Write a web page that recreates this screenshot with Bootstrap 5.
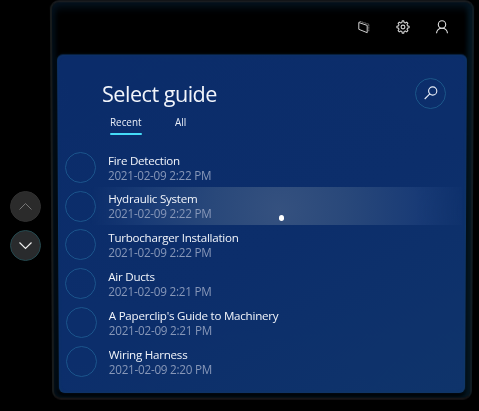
<!DOCTYPE html>
<html lang="en">
<head>
<meta charset="utf-8">
<meta name="viewport" content="width=device-width, initial-scale=1">
<title>Select guide</title>
<link href="https://cdn.jsdelivr.net/npm/bootstrap@5.3.0/dist/css/bootstrap.min.css" rel="stylesheet">
<style>
body{background:#000;font-family:"Open Sans","Noto Sans",sans-serif;color:#f2f5fb;width:479px;height:411px}
.pager{width:50px;padding:191px 0 0 10px;gap:8px}
.pager .btn{width:31px;height:31px;background:#2b2b2b;border:1px solid #303030;color:#777;flex:none}
.pager .btn.next{border-color:#24494f;color:#eee;background:#292b2d}
.frame{width:424px;height:400px;margin-top:1px;perspective:2000px;isolation:isolate}
.frame::before{content:"";position:absolute;z-index:-2;inset:0 1px;border-radius:9px;border:2px solid;border-color:#191c20 #101c23 #171516 #171b1c;background:#000;box-shadow:inset 0 5px 8px #05131f,inset -4px 0 5px #051b25,inset 3px 0 5px #020d15;transform:rotateX(-3.1deg)}
.topbar{height:54px;padding:17.5px 24.5px 0 0;gap:23px}
.topbar svg{display:block}
.panel{margin:0 7px 0 7px;height:339px;perspective:2000px}
.panel::before{content:"";position:absolute;z-index:-1;inset:0 1px;border-radius:6px;background:linear-gradient(150deg,#0b2c6a,#0c2e6b 55%,#0f346b);box-shadow:inset 0 0 3px #123c60,0 0 3px #04192a;transform:rotateX(-3.1deg)}
h1{font-size:21.6px;line-height:28px;font-weight:400;letter-spacing:-.5px}
.head{padding:25px 21px 0 45px;height:61px}
.ring{width:31px;height:31px;border:1px solid #1c558c;flex:none}
.find{margin-top:-2.5px;border-color:#1c5789;color:#e8edf7}
.tabs{padding-left:53px;font-size:9.9px;line-height:13px;height:32px}
.tabs .nav-link{color:#e8edf7;line-height:13px;height:19.5px;margin-right:33.5px;position:relative}
.tabs .active::after{content:"";display:block;height:2.5px;border-radius:2px;background:#45dcf7;margin-top:3.5px}
.guide{height:38.8px;padding-left:8px;gap:12px}
.guide+.guide{margin-left:.25px}
.guide:nth-child(n+5){margin-left:.8px}
.guide-title{font-size:11.6px;line-height:15px;letter-spacing:-.25px;margin-top:1px}
.guide-date{font-size:11.7px;line-height:15.5px;letter-spacing:-.25px;color:#8797b8}
.guide.hot::before{content:"";position:absolute;z-index:-1;left:10px;right:5px;top:0;bottom:1px;background:radial-gradient(ellipse 190px 190px at 213px 24px,#35517f,#29487a 35%,#193b76 72%,rgba(20,50,110,0))}
.pointer{left:221.5px;top:28.7px;width:5px;height:5.5px;background:#fff}
</style>
<script src="https://cdn.jsdelivr.net/npm/bootstrap@5.3.0/dist/js/bootstrap.bundle.min.js"></script>
</head>
<body class="d-flex overflow-hidden">
<nav class="pager d-flex flex-column flex-shrink-0" aria-label="Pages">
  <button class="btn rounded-circle p-0 d-flex align-items-center justify-content-center" aria-label="Up"><svg width="15" height="9" viewBox="0 0 15 9" fill="none" stroke="currentColor"><path d="M1.5 7.5l6-6 6 6"/></svg></button>
  <button class="btn next rounded-circle p-0 d-flex align-items-center justify-content-center" aria-label="Down"><svg width="15" height="9" viewBox="0 0 15 9" fill="none" stroke="currentColor" stroke-width="1.2"><path d="M1.5 1.5l6 6 6-6"/></svg></button>
</nav>
<main class="frame position-relative flex-shrink-0">
  <header class="topbar d-flex justify-content-end">
    <svg width="16" height="16" viewBox="0 0 16 16" fill="none" stroke="#d0d0d0" stroke-width="1" stroke-linejoin="round"><path d="M2.800 3.500l8.400 2.900v7.300L2.800 10.300z"/><path d="M4.500 2.500l8.300 2.700v7.500" stroke="#999" stroke-width=".8" stroke-dasharray="1.200 .4"/><path d="M2.800 3.500L4.500 2.500" stroke="#aaa"/></svg>
    <svg width="16" height="16" viewBox="0 0 16 16" fill="none" stroke="#d5d5d5" stroke-width="1.100" stroke-linejoin="round"><path d="M6.900 3.500l.3-1.600h1.600l.3 1.600 1.200.5 1.400-.9 1.200 1.200-.9 1.400.5 1.200 1.600.3v1.600l-1.600.3-.5 1.200.9 1.400-1.200 1.200-1.400-.9-1.200.5-.3 1.600H7.200l-.3-1.600-1.200-.5-1.400.9-1.200-1.200.9-1.400-.5-1.200-1.600-.3V7.200l1.600-.3.5-1.200-.9-1.400 1.200-1.200 1.400.9z"/><circle cx="8" cy="8" r="1.900"/></svg>
    <svg width="16" height="16" viewBox="0 0 16 16" fill="none" stroke="#e0e0e0" stroke-width="1.100"><circle cx="8" cy="5.500" r="3.700"/><path d="M2.500 14.300c.3-3.200 2.600-5.100 5.500-5.100s5.200 1.900 5.500 5.100"/></svg>
  </header>
  <section class="panel position-relative">
    <div class="head d-flex justify-content-between align-items-start">
      <h1 class="m-0">Select guide</h1>
      <button class="btn ring find rounded-circle p-0 d-flex align-items-center justify-content-center" aria-label="Search"><svg width="16" height="16" viewBox="0 0 16 16" fill="none" stroke="currentColor" stroke-width="1.100"><circle cx="9.700" cy="6" r="4.100"/><path d="M6.800 8.900L1.700 14"/></svg></button>
    </div>
    <nav class="nav tabs">
      <a class="nav-link active p-0" href="#">Recent</a>
      <a class="nav-link p-0" href="#">All</a>
    </nav>
    <div class="guides">
      <div class="guide d-flex align-items-center"><span class="ring rounded-circle"></span><div><div class="guide-title">Fire Detection</div><div class="guide-date">2021-02-09 2:22 PM</div></div></div>
      <div class="guide hot position-relative d-flex align-items-center"><span class="ring rounded-circle"></span><div><div class="guide-title">Hydraulic System</div><div class="guide-date">2021-02-09 2:22 PM</div></div><span class="pointer position-absolute rounded-circle"></span></div>
      <div class="guide d-flex align-items-center"><span class="ring rounded-circle"></span><div><div class="guide-title">Turbocharger Installation</div><div class="guide-date">2021-02-09 2:22 PM</div></div></div>
      <div class="guide d-flex align-items-center"><span class="ring rounded-circle"></span><div><div class="guide-title">Air Ducts</div><div class="guide-date">2021-02-09 2:21 PM</div></div></div>
      <div class="guide d-flex align-items-center"><span class="ring rounded-circle"></span><div><div class="guide-title">A Paperclip's Guide to Machinery</div><div class="guide-date">2021-02-09 2:21 PM</div></div></div>
      <div class="guide d-flex align-items-center"><span class="ring rounded-circle"></span><div><div class="guide-title">Wiring Harness</div><div class="guide-date">2021-02-09 2:20 PM</div></div></div>
    </div>
  </section>
</main>
</body>
</html>
